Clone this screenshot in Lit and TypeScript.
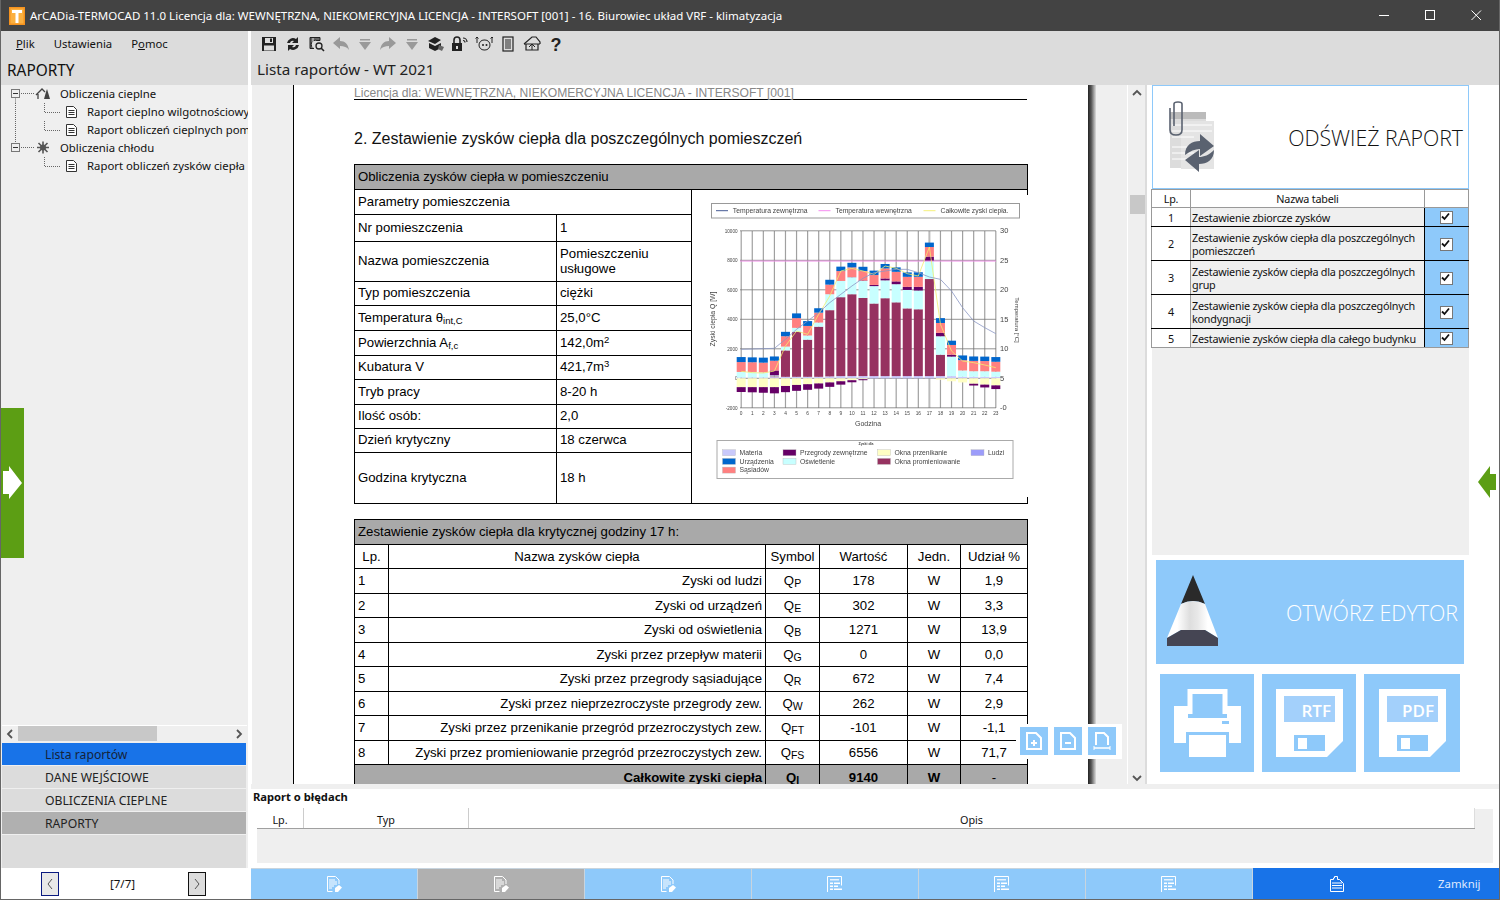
import { LitElement, html, css, svg } from 'lit';
import { customElement } from 'lit/decorators.js';

const blue = css`#8ec9fa`;

// cumulative tops per hour: ludzi, okna prom., oswietlenie, przegrody, sasiadow, urzadzenia + negative stack
const bars: number[][] = [
    [60, 60, 430, 430, 1100, 1440, -600, -930],
    [60, 60, 430, 430, 1090, 1420, -600, -950],
    [60, 60, 400, 400, 1060, 1400, -600, -980],
    [80, 130, 200, 530, 1190, 1480, -600, -1020],
    [100, 1890, 2150, 2150, 2850, 3150, -520, -940],
    [100, 3150, 3420, 3420, 4080, 4400, -450, -850],
    [100, 2620, 2900, 2900, 3550, 3880, -400, -780],
    [100, 3500, 3780, 3780, 4450, 4750, -350, -700],
    [130, 4620, 5700, 5700, 6350, 6680, -280, -580],
    [150, 5500, 6600, 6600, 7270, 7570, -200, -430],
    [150, 5700, 6850, 6860, 7520, 7830, -130, -270],
    [150, 5450, 6600, 6630, 7270, 7560, -60, -130],
    [150, 5070, 6250, 6330, 7000, 7300, 0, 0],
    [150, 5430, 6640, 6770, 7450, 7750, 0, 0],
    [150, 5150, 6380, 6570, 7220, 7520, 0, 0],
    [150, 4740, 5990, 6200, 6880, 7180, 0, 0],
    [150, 4680, 5950, 6200, 6880, 7190, 0, 0],
    [150, 6730, 7950, 8250, 8900, 9200, 0, 0],
    [150, 1600, 2850, 3080, 3750, 4080, -100, -100],
    [150, 150, 1470, 1600, 2260, 2550, -200, -200],
    [100, 100, 530, 530, 1230, 1550, -280, -280],
    [100, 100, 480, 480, 1180, 1480, -370, -490],
    [100, 100, 480, 480, 1170, 1470, -430, -620],
    [100, 100, 450, 450, 1120, 1440, -480, -730],
];
const stackColors = ['#c9c9fb', '#963260', '#c8ffff', '#660066', '#ff8080', '#0066cc'];
const outsideY = [475, 474, 473, 472, 445, 415, 390, 365, 335, 310, 285, 262, 245, 240, 235, 235, 245, 258, 265, 300, 350, 390, 410, 428];
const totalY = [541, 545, 546, 540, 465, 420, 430, 370, 315, 240, 232, 240, 250, 225, 232, 248, 255, 168, 400, 480, 510, 515, 522, 530];

// chart svg origin is page x=691.5, y=190
const hx = (i: number) => 49.2 + i * 11.07;
const wy = (w: number) => 187.3 - w * 0.01475;

const gains: string[][] = [
    ['1', 'Zyski od ludzi', 'Q', 'P', '178', 'W', '1,9'],
    ['2', 'Zyski od urządzeń', 'Q', 'E', '302', 'W', '3,3'],
    ['3', 'Zyski od oświetlenia', 'Q', 'B', '1271', 'W', '13,9'],
    ['4', 'Zyski przez przepływ materii', 'Q', 'G', '0', 'W', '0,0'],
    ['5', 'Zyski przez przegrody sąsiadujące', 'Q', 'R', '672', 'W', '7,4'],
    ['6', 'Zyski  przez nieprzezroczyste przegrody zew.', 'Q', 'W', '262', 'W', '2,9'],
    ['7', 'Zyski przez przenikanie przegród przezroczystych  zew.', 'Q', 'FT', '-101', 'W', '-1,1'],
    ['8', 'Zyski przez promieniowanie przegród przezroczystych zew.', 'Q', 'FS', '6556', 'W', '71,7'],
];

const tableRows: string[][] = [
    ['1', 'Zestawienie zbiorcze zysków'],
    ['2', 'Zestawienie zysków ciepła dla poszczególnych pomieszczeń'],
    ['3', 'Zestawienie zysków ciepła dla poszczególnych grup'],
    ['4', 'Zestawienie zysków ciepła dla poszczególnych kondygnacji'],
    ['5', 'Zestawienie zysków ciepła dla całego budynku'],
];

@customElement('app-root')
class AppRoot extends LitElement {
    static styles = css`
        :host {
            display: block;
            width: 1500px;
            height: 900px;
            position: relative;
            overflow: hidden;
            font-family: "Noto Sans", "Open Sans", sans-serif;
            font-size: 11.5px;
            color: #111;
            background: #fff;
        }
        .window {
            width: 1500px;
            height: 900px;
            display: flex;
            flex-direction: column;
            box-sizing: border-box;
            border-left: 1px solid #666;
            border-right: 1px solid #666;
            border-bottom: 1px solid #666;
        }

        /* title bar */
        .title {
            height: 31px;
            flex: none;
            background: #434343;
            color: #fff;
            display: flex;
            align-items: center;
            padding-left: 8px;
            gap: 5px;
            font-size: 11.52px;
        }
        .title .name { flex: 1; white-space: nowrap; }
        .logo { width: 16px; height: 18px; flex: none; }
        .win-btns { display: flex; }
        .win-btns span { width: 46px; height: 31px; display: flex; align-items: center; justify-content: center; }

        .body { flex: 1; display: flex; min-height: 0; }

        /* left column */
        .left { width: 247px; flex: none; display: flex; flex-direction: column; background: #efefef; }
        .left-head { height: 54px; flex: none; background: #dcdcdc; box-sizing: border-box; padding: 0 0 0 15px; }
        .menu { display: flex; gap: 19px; height: 24px; align-items: center; font-size: 11.3px; }
        .menu u { text-decoration-thickness: 1px; }
        .left-title { font-size: 15.4px; margin: 6px 0 0 -9px; line-height: 20px; }
        .tree { flex: 1; padding: 0 0 0 10px; overflow: hidden; }
        .tree-row { height: 18px; display: flex; align-items: center; white-space: nowrap; font-size: 11.35px; }
        .tree-row svg { flex: none; }
        .tree-row .lbl { margin-left: 7px; margin-bottom: 2px; }
        .tree-row.child .lbl { margin-left: 8px; }
        .hscroll { height: 16px; flex: none; display: flex; align-items: center; background: #efefef; margin: 0 1px 1px 1px; border-top: 1px solid #fff; }
        .hscroll .arr { width: 16px; flex: none; display: flex; justify-content: center; }
        .hscroll .track { flex: 1; height: 16px; }
        .hscroll .thumb { width: 139px; height: 15px; background: #c8c8c8; }
        .nav { flex: none; display: flex; flex-direction: column; padding: 0 2px 0 1px; background: #efefef; }
        .nav div { height: 22px; margin-bottom: 1px; padding-left: 43px; display: flex; align-items: center; background: #dcdcdc; font-size: 12.2px; color: #222; }
        .nav .cur { background: #1873e8; color: #15233a; }
        .nav .sel { background: #b0b0b0; }
        .nav .fill { height: 33px; margin: 0; background: #dcdcdc; }
        .pager { height: 31px; flex: none; background: #fff; display: flex; align-items: center; justify-content: space-between; padding: 0 42px 0 40px; }
        .pager button { width: 18px; height: 24px; padding: 0; box-sizing: border-box; background: #dcdcdc; border: 1px solid #111; display: flex; align-items: center; justify-content: center; }
        .pager button.focus { border-color: #0a1a80; background: #e8e8e8; }
        .pager span { font-size: 11.6px; margin-right: 2px; }

        /* right part */
        .right { flex: 1; display: flex; flex-direction: column; min-width: 0; padding-left: 3px; }
        .toolbar { height: 54px; flex: none; background: #dcdcdc; padding-left: 6px; }
        .tools { height: 26px; display: flex; align-items: center; gap: 5.9px; padding-left: 3px; }
        .tools svg { width: 18px; height: 18px; display: block; }
        .list-title { font-size: 15.25px; line-height: 22px; margin-top: 1px; color: #222; }
        .main { flex: 1; display: flex; min-height: 0; }
        .viewer { width: 896px; flex: none; display: flex; background: #efefef; position: relative; border-right: 2px solid #dcdcdc; box-sizing: border-box; }
        .paper-area { flex: 1; overflow: hidden; padding-left: 41px; display: flex; align-items: flex-start; border-left: 1px solid #fff; }
        .paper { width: 794px; flex: none; background: #fff; border-left: 1px solid #000; height: 100%; font-family: "Liberation Sans", Arial, sans-serif; }
        .paper-shadow { width: 8px; flex: none; height: 100%; background: linear-gradient(to right, #222, #555 40%, #ddd); }
        .paper-in { margin-left: 60px; width: 673px; }
        .lic { margin-top: 1px; height: 13px; line-height: 15px; border-bottom: 1px solid #000; font-size: 12.12px; color: #888; white-space: nowrap; }
        h2 { margin: 29px 0 0; font-size: 16px; font-weight: 400; line-height: 20px; color: #111; white-space: nowrap; }
        table { border-collapse: collapse; }
        .rep { width: 673px; table-layout: fixed; font-size: 13.2px; color: #000; box-sizing: border-box; }
        .rep td { border: 1px solid #000; padding: 0 3px; box-sizing: border-box; line-height: 15px; white-space: nowrap; }
        .rep td.head { background: #a9a9a9; }
        .t1 td { padding-bottom: 2px; }
        .t2 tr:first-child td { padding-bottom: 2px; }
        .rep sub { font-size: 9.5px; line-height: 0; vertical-align: -2px; }
        .rep sub.s { font-size: 10.5px; }
        .rep sup { font-size: 9.5px; line-height: 0; vertical-align: 4px; }
        .rep .c { text-align: center; }
        .rep .r { text-align: right; }
        .rep .b { font-weight: 700; }
        .t1 { margin-top: 15px; }
        .t2 { margin-top: 15px; }
        .chart-cell { padding: 0 !important; background: #fff; vertical-align: top; position: relative; }
        .chart { display: block; position: absolute; left: 0; top: 5px; width: 336px; height: 302px; background: #fff; filter: blur(0.3px); font-family: "Liberation Sans", Arial, sans-serif; }

        .vscroll { width: 18px; flex: none; display: flex; flex-direction: column; align-items: center; justify-content: space-between; padding: 4px 0 2px; box-sizing: border-box; border-left: 1px solid #fff; background: #efefef; position: relative; }
        .vthumb { position: absolute; left: 2px; right: 0; top: 110px; height: 19px; background: #c8c8c8; }

        /* floating zoom buttons */
        .zoom-btns { position: absolute; left: 765px; top: 639px; background: #fff; padding: 3px 6px 3px 4px; display: flex; gap: 6px; box-sizing: border-box; height: 35px; }
        .zoom-btns span { width: 28px; height: 28px; background: ${blue}; display: flex; align-items: center; justify-content: center; }

        /* report side panel */
        .side { flex: 1; background: #fff; position: relative; padding-left: 5px; }
        .side-in { width: 317px; }
        .refresh { height: 104px; box-sizing: border-box; border: 1px solid ${blue}; display: flex; align-items: center; justify-content: space-between; padding: 0 5px 0 16px; font-family: "Open Sans", sans-serif; font-weight: 300; font-size: 21.3px; color: #111; background: #fff; white-space: nowrap; }
        .ttab { width: 317px; margin-left: -1px; table-layout: fixed; font-size: 10.8px; letter-spacing: -0.22px; color: #111; }
        .ttab td { padding: 0 1px; box-sizing: border-box; line-height: 13px; background: #efefef; border-bottom: 1px solid #000; border-left: 1px solid #999; border-right: 1px solid #000; }
        .ttab .lp { text-align: center; background: #fff; border-right-color: #999; }
        .ttab .chk { background: ${blue}; border-left: 0; border-right: 1px solid #999; text-align: center; padding-right: 2px; }
        .ttab tr.h td { background: #fff; border-bottom: 1px solid #999; border-top: 1px solid #999; border-right: 1px solid #999; text-align: center; }
        .ttab tr:last-child td { border-bottom-color: #999; }
        .box { width: 11px; height: 11px; border: 1px solid #777; background: #fff; display: inline-flex; vertical-align: middle; }
        .side-fill { height: 207px; background: #efefef; }
        .editor { margin: 5px 0 0 4px; width: 308px; height: 104px; background: ${blue}; display: flex; align-items: center; justify-content: space-between; padding: 0 6px 0 11px; box-sizing: border-box; color: #fff; font-family: "Open Sans", sans-serif; font-weight: 300; font-size: 21.4px; white-space: nowrap; }
        .editor svg { margin-bottom: 4px; flex: none; }
        .exports { margin: 10px 0 0 8px; display: flex; gap: 8px; }
        .exports div { width: 94px; height: 98px; background: ${blue}; display: flex; align-items: center; justify-content: center; }
        .exports div:last-child { width: 96px; }
        .exports svg { font-family: "Open Sans", sans-serif; }
        .side-arrow { position: absolute; left: 331px; top: 381px; }

        .left-arrow { position: absolute; left: 1px; top: 408px; width: 23px; height: 150px; background: #5c9e14; display: flex; align-items: center; justify-content: center; }
        .left-arrow svg { margin-bottom: 2px; }

        /* error report */
        .errors { height: 84px; flex: none; background: #fff; border-top: 5px solid #efefef; box-sizing: border-box; position: relative; }
        .err-title { font-weight: 700; font-size: 11.2px; line-height: 15px; padding-left: 2px; }
        .err-grid { margin: 4px 6px 0 6px; }
        .err-head { height: 21px; display: flex; font-size: 10.8px; border-bottom: 1px solid #a0a0a0; width: 1218px; box-sizing: border-box; align-items: center; }
        .err-head span { text-align: center; box-sizing: border-box; border-right: 1px solid #ccc; height: 20px; line-height: 24px; }
        .err-head .e1 { width: 47px; }
        .err-head .e2 { width: 165px; }
        .err-head .e3 { flex: 1; border-right: 1px solid #ddd; }
        .err-body { height: 34px; background: #efefef; }
        .err-corner { position: absolute; left: 1224px; top: 20px; width: 18px; height: 21px; background: #efefef; }

        /* bottom tabs */
        .tabs { height: 31px; flex: none; display: flex; }
        .tabs .tab { width: 167px; background: ${blue}; border-right: 1px solid #c8d4de; box-sizing: border-box; display: flex; align-items: center; justify-content: center; border-top: 1px solid #c8d4de; }
        .tabs .tab.on { background: #b0b0b0; }
        .tabs .close { flex: 1; background: #1873e8; display: flex; align-items: center; color: #dfe9ff; padding-left: 77px; font-size: 11.4px; }
        .tabs .close svg { margin-right: 94px; }
    `;

    render() {
        return html`
            <div class="window">
                <div class="title">
                    <svg class="logo" viewBox="0 0 16 18">
                        <rect width="16" height="18" fill="#f5921e"/><rect x="1.500" y="1.500" width="13" height="15" fill="#fbb040"/>
                        <path d="M3 3h10v3H9.500v10h-3V6H3z" fill="#fff"/>
                    </svg>
                    <span class="name">ArCADia-TERMOCAD 11.0 Licencja dla: WEWNĘTRZNA, NIEKOMERCYJNA LICENCJA - INTERSOFT [001] - 16. Biurowiec układ VRF - klimatyzacja</span>
                    <div class="win-btns">
                        <span><svg width="11" height="11"><path d="M0 5.500h10" stroke="#fff"/></svg></span>
                        <span><svg width="11" height="11"><rect x=".5" y=".5" width="9" height="9" fill="none" stroke="#fff"/></svg></span>
                        <span><svg width="11" height="11"><path d="M.5.500l9.500 9.500M10 .5L.5 10" stroke="#fff"/></svg></span>
                    </div>
                </div>
                <div class="body">
                    ${this.renderLeft()}
                    <div class="right">
                        <div class="toolbar">
                            <div class="tools">${this.renderTools()}</div>
                            <div class="list-title">Lista raportów - WT 2021</div>
                        </div>
                        <div class="main">
                            ${this.renderViewer()}
                            ${this.renderSide()}
                        </div>
                        <div class="errors">
                            <div class="err-title">Raport o błędach</div>
                            <div class="err-grid">
                                <div class="err-head"><span class="e1">Lp.</span><span class="e2">Typ</span><span class="e3">Opis</span></div>
                                <div class="err-body"></div>
                            </div>
                            <div class="err-corner"></div>
                        </div>
                        <div class="tabs">
                            ${[0, 1, 2].map(i => html`<div class="tab ${i === 1 ? 'on' : ''}">${this.tabDoc()}</div>`)}
                            ${[0, 1, 2].map(() => html`<div class="tab">${this.tabCalc()}</div>`)}
                            <div class="close">
                                <svg width="14" height="16" viewBox="0 0 14 16"><path d="M.5 3.500h3V2h1V.5h3V3.500h2l4 4v8H.5z" fill="none" stroke="#fff"/><path d="M2 7h10M2 9.500h10M2 12h10" stroke="#fff"/></svg>
                                Zamknij
                            </div>
                        </div>
                    </div>
                </div>
                <div class="left-arrow">
                    <svg width="19" height="33" viewBox="0 0 19 33"><path d="M0 5h6V0l13 17L6 33v-5H0z" fill="#fff"/></svg>
                </div>
            </div>
        `;
    }

    treeChild(label: string, outerLine: boolean) {
        return html`
            <div class="tree-row child">
                <svg width="68" height="18" viewBox="0 0 68 18">
                    ${outerLine ? svg`<path d="M4.500 0v18" stroke="#666" stroke-dasharray="1 1"/>` : ''}
                    <path d="M33.500 0v9.500H50" fill="none" stroke="#666" stroke-dasharray="1 1"/>
                    <path d="M55.500 3.500h7l3 3v8h-10z" fill="#fff" stroke="#333"/>
                    <path d="M57.500 7.500h6M57.500 9.500h6M57.500 11.500h6" stroke="#333"/>
                </svg>
                <span class="lbl">${label}</span>
            </div>
        `;
    }

    renderLeft() {
        return html`
            <div class="left">
                <div class="left-head">
                    <div class="menu"><span><u>P</u>lik</span><span>Ustawienia</span><span>P<u>o</u>moc</span></div>
                    <div class="left-title">RAPORTY</div>
                </div>
                <div class="tree">
                    <div class="tree-row">
                        <svg width="42" height="18" viewBox="0 0 42 18"><path d="M4.500 12.500V18" stroke="#666" stroke-dasharray="1 1"/><rect x=".5" y="4.500" width="8" height="8" fill="#efefef" stroke="#777"/><path d="M2 8.500h5" stroke="#333"/><path d="M10 8.500h13" stroke="#666" stroke-dasharray="1 1"/><path d="M25 10l6-6 3 3m-7 2v5" fill="none" stroke="#444" stroke-width="1.300"/><path d="M33 14l2-7 1-3 3 10z" fill="#444"/></svg>
                        <span class="lbl">Obliczenia cieplne</span>
                    </div>
                    ${this.treeChild('Raport cieplno wilgotnościowy', true)}
                    ${this.treeChild('Raport obliczeń cieplnych pomieszczeń', true)}
                    <div class="tree-row">
                        <svg width="42" height="18" viewBox="0 0 42 18"><path d="M4.500 0v4.500" stroke="#666" stroke-dasharray="1 1"/><rect x=".5" y="4.500" width="8" height="8" fill="#efefef" stroke="#777"/><path d="M2 8.500h5" stroke="#333"/><path d="M10 8.500h13" stroke="#666" stroke-dasharray="1 1"/><g stroke="#555" stroke-width="1.600" fill="none"><path d="M32 2.500v12M26 8.500h12M27.500 4l9 9M36.500 4l-9 9"/></g><circle cx="32" cy="8.500" r="3" fill="#555"/></svg>
                        <span class="lbl">Obliczenia chłodu</span>
                    </div>
                    ${this.treeChild('Raport obliczeń zysków ciepła', false)}
                </div>
                <div class="hscroll">
                    <span class="arr">${this.chev('M6 1L2 5l4 4')}</span>
                    <div class="track"><div class="thumb"></div></div>
                    <span class="arr">${this.chev('M2 1l4 4-4 4')}</span>
                </div>
                <div class="nav">
                    <div class="cur">Lista raportów</div>
                    <div>DANE WEJŚCIOWE</div>
                    <div>OBLICZENIA CIEPLNE</div>
                    <div class="sel">RAPORTY</div>
                    <div class="fill"></div>
                </div>
                <div class="pager">
                    <button class="focus"><svg width="8" height="14"><path d="M6 2L2 7l4 5" fill="none" stroke="#555"/></svg></button>
                    <span>[7/7]</span>
                    <button><svg width="8" height="14"><path d="M2 2l4 5-4 5" fill="none" stroke="#555"/></svg></button>
                </div>
            </div>
        `;
    }

    chev(d: string) {
        return html`<svg width="8" height="10"><path d=${d} fill="none" stroke="#555" stroke-width="1.800"/></svg>`;
    }

    renderTools() {
        const k = '#222';
        const g = '#999';
        const tools = [
            svg`<path d="M2 2h14v14H2z" fill="${k}"/><rect x="5" y="3" width="8" height="5" fill="#ddd"/><rect x="4" y="10.500" width="10" height="5" fill="#ddd"/><rect x="10" y="3.500" width="2" height="3.500" fill="${k}"/>`,
            svg`<path d="M3 8a6 6 0 0 1 9-4l2-2v6H8l2-2a3 3 0 0 0-4 2zM15 10a6 6 0 0 1-9 4l-2 2v-6h6l-2 2a3 3 0 0 0 4-2z" fill="${k}"/>`,
            svg`<path d="M2 2.500h10v3H9a4 4 0 0 0-3 8H2z" fill="#666" stroke="${k}"/><path d="M5 3v10" stroke="#ddd"/><circle cx="11" cy="11" r="3" fill="#ddd" stroke="${k}" stroke-width="1.300"/><path d="M13 13l3 3" stroke="${k}" stroke-width="1.600"/>`,
            svg`<path d="M1 8l7-6v4c5 0 8 3 9 9-2-3-5-4-9-4v3z" fill="${g}"/>`,
            svg`<path d="M4 4h10v1.500H4zM3 7h12l-6 8z" fill="${g}"/>`,
            svg`<path d="M17 8l-7-6v4C5 6 2 9 1 15c2-3 5-4 9-4v3z" fill="${g}"/>`,
            svg`<path d="M4 4h10v1.500H4zM3 7h12l-6 8z" fill="${g}"/>`,
            svg`<path d="M1 6l7-4 6 3-6 4zM2 8l6 3 6-3v5l-6 3-6-3z" fill="${k}"/><path d="M12 10l5 2-2 4-4-2z" fill="#666"/>`,
            svg`<rect x="1" y="8" width="10" height="8" fill="${k}"/><path d="M3 8V5a3 3 0 0 1 6 0v3" fill="none" stroke="${k}" stroke-width="1.600"/><rect x="5" y="11" width="2" height="3" fill="#ddd"/><path d="M12 3a4 4 0 0 1 4 4M12 5.500a2 2 0 0 1 2 2" fill="none" stroke="${k}" stroke-width="1.200"/>`,
            svg`<rect x="4" y="5" width="11" height="10" rx="5" fill="#ddd" stroke="${k}"/><circle cx="8" cy="10" r="1" fill="${k}"/><circle cx="11.500" cy="10" r="1" fill="${k}"/><path d="M2 8V2M.5 3.500L2 2l1.500 1.500M17 8V2M15.500 3.500L17 2l1.500 1.500" fill="none" stroke="${k}"/>`,
            svg`<rect x="4" y="2" width="10" height="14" fill="#ddd" stroke="${k}" stroke-width="1.200"/><path d="M6 5h6M6 7h6M6 9h6M6 11h6M6 13h6" stroke="${k}"/>`,
            svg`<path d="M1 9l8-7h4l4 5v2M3 9v6h12V9" fill="none" stroke="${k}" stroke-width="1.200"/><path d="M1 9h16M6 12l3-3 3 3M9 9v6" fill="none" stroke="${k}"/>`,
            svg`<text x="9" y="15.500" text-anchor="middle" font-family="Liberation Sans" font-weight="700" font-size="18" fill="${k}">?</text>`,
        ];
        return tools.map(t => html`<svg viewBox="0 0 18 18">${t}</svg>`);
    }

    tabDoc() {
        return html`<svg width="15" height="17" viewBox="0 0 15 17"><path d="M.5.500h8l3.500 3.500v4" fill="none" stroke="#fff"/><path d="M.5.500v15h5" fill="none" stroke="#fff"/><path d="M2 4h6M2 6h8M2 8h8M2 10h5M2 12h3" stroke="#fff"/><path d="M8 12l4-3 3 2.500-4 4.500H8z" fill="#fff"/></svg>`;
    }

    tabCalc() {
        return html`<svg width="16" height="16" viewBox="0 0 16 16"><path d="M.5 16V.5h14v9" fill="none" stroke="#fff"/><path d="M3 3h9v1.500H3z" fill="#fff" opacity=".8"/><path d="M3 6.500h3v1.500H3zM7 6.500h6v1.500H7zM3 9.500h3V11H3zM7 9.500h4V11H7zM3 12.500h3V14H3zM7 12.500h8V14H7z" fill="#fff"/></svg>`;
    }

    renderViewer() {
        return html`
            <div class="viewer">
                <div class="paper-area">
                    <div class="paper">
                        <div class="paper-in">
                            <div class="lic">Licencja dla: WEWNĘTRZNA, NIEKOMERCYJNA LICENCJA - INTERSOFT [001]</div>
                            <h2>2. Zestawienie zysków ciepła dla poszczególnych pomieszczeń</h2>
                            ${this.renderRoomTable()}
                            ${this.renderGainsTable()}
                        </div>
                    </div>
                    <div class="paper-shadow"></div>
                </div>
                <div class="vscroll">
                    <svg width="10" height="8"><path d="M1 6l4-4 4 4" fill="none" stroke="#555" stroke-width="1.800"/></svg>
                    <div class="vthumb"></div>
                    <svg width="10" height="8"><path d="M1 2l4 4 4-4" fill="none" stroke="#555" stroke-width="1.800"/></svg>
                </div>
                <div class="zoom-btns">
                    <span><svg width="16" height="18" viewBox="0 0 16 18"><path d="M1 1h9l5 5v11H1z" fill="none" stroke="#fff" stroke-width="2"/><path d="M5 11h6M8 8v6" stroke="#fff" stroke-width="2"/></svg></span>
                    <span><svg width="16" height="18" viewBox="0 0 16 18"><path d="M1 1h9l5 5v11H1z" fill="none" stroke="#fff" stroke-width="2"/><path d="M5 11h6" stroke="#fff" stroke-width="2"/></svg></span>
                    <span><svg width="18" height="18" viewBox="0 0 18 18"><path d="M3 13V1h8l4 4v8" fill="none" stroke="#fff" stroke-width="2"/><path d="M1 16h16" stroke="#fff" stroke-width="1.500"/><path d="M1 14v4M17 14v4" stroke="#fff"/></svg></span>
                </div>
            </div>
        `;
    }

    renderRoomTable() {
        const rows: [unknown, unknown, number][] = [
            ['Nr pomieszczenia', '1', 27],
            ['Nazwa pomieszczenia', html`Pomieszczeniu<br>usługowe`, 40],
            ['Typ pomieszczenia', 'ciężki', 24],
            [html`Temperatura θ<sub>int,C</sub>`, '25,0°C', 25],
            [html`Powierzchnia A<sub>f,c</sub>`, html`142,0m<sup>2</sup>`, 25],
            ['Kubatura V', html`421,7m<sup>3</sup>`, 24],
            ['Tryb pracy', '8-20 h', 25],
            ['Ilość osób:', '2,0', 24],
            ['Dzień krytyczny', '18 czerwca', 24],
            ['Godzina krytyczna', '18 h', 51],
        ];
        return html`
            <table class="rep t1">
                <colgroup><col style="width:202px"><col style="width:135px"><col style="width:336px"></colgroup>
                <tr style="height:25px"><td class="head" colspan="3">Obliczenia zysków ciepła w pomieszczeniu</td></tr>
                <tr style="height:25px">
                    <td colspan="2">Parametry pomieszczenia</td>
                    <td class="chart-cell" rowspan="11">${this.renderChart()}</td>
                </tr>
                ${rows.map(r => html`<tr style="height:${r[2]}px"><td>${r[0]}</td><td>${r[1]}</td></tr>`)}
            </table>
        `;
    }

    renderGainsTable() {
        return html`
            <table class="rep t2">
                <colgroup>
                    <col style="width:34px"><col style="width:377px"><col style="width:54px">
                    <col style="width:88px"><col style="width:53px"><col style="width:67px">
                </colgroup>
                <tr style="height:25px"><td class="head" colspan="6">Zestawienie zysków ciepła dla krytycznej godziny 17 h:</td></tr>
                <tr style="height:24px">
                    <td class="c">Lp.</td><td class="c">Nazwa zysków ciepła</td><td class="c">Symbol</td>
                    <td class="c">Wartość</td><td class="c">Jedn.</td><td class="c">Udział %</td>
                </tr>
                ${gains.map(g => html`
                    <tr style="height:24.5px">
                        <td>${g[0]}</td><td class="r">${g[1]}</td>
                        <td class="c">${g[2]}<sub class="s">${g[3]}</sub></td>
                        <td class="c">${g[4]}</td><td class="c">${g[5]}</td><td class="c">${g[6]}</td>
                    </tr>
                `)}
                <tr style="height:25px">
                    <td class="head" colspan="2" style="text-align:right"><b>Całkowite zyski ciepła</b></td>
                    <td class="head c b">Q<sub class="s">I</sub></td><td class="head c b">9140</td><td class="head c b">W</td><td class="head c">-</td>
                </tr>
            </table>
        `;
    }

    renderChart() {
        const grid = [];
        for (let i = 0; i < 24; i++) {
            grid.push(svg`<line x1=${hx(i)} x2=${hx(i)} y1="40" y2="217" stroke=${i === 17 ? '#bbb' : '#a0a0a0'} stroke-width=${i === 17 ? 2 : 1.2}/>`);
        }
        const hlines = [-2000, 0, 2000, 4000, 6000, 8000, 10000].map(v => svg`
            <line x1="48" x2="304" y1=${wy(v)} y2=${wy(v)} stroke="#777" stroke-width=".8"/>
            <text x="45.500" y=${wy(v) + 1.8} text-anchor="end" font-size="4.600" fill="#444">${v}</text>
        `);
        const rights = [0, 5, 10, 15, 20, 25, 30].map((v, i) => svg`
            <text x="308" y=${216.7 - i * 29.5 + 2.5} font-size="7.500" fill="#444">${v === 0 ? '-0' : v}</text>
        `);
        const stacks = bars.map((b, i) => {
            const x = hx(i) - 4.5;
            const parts = [];
            let prev = 0;
            for (let s = 0; s < 6; s++) {
                if (b[s] > prev) {
                    parts.push(svg`<rect x=${x} width="9" y=${wy(b[s])} height=${(b[s] - prev) * 0.01475} fill=${stackColors[s]}/>`);
                    prev = b[s];
                }
            }
            if (b[6] < 0) parts.push(svg`<rect x=${x} width="9" y=${wy(0)} height=${-b[6] * 0.01475} fill="#ffffc4"/>`);
            if (b[7] < b[6]) parts.push(svg`<rect x=${x} width="9" y=${wy(b[6])} height=${(b[6] - b[7]) * 0.01475} fill="#660066"/>`);
            return parts;
        });
        const pts = (ys: number[]) => ys.map((y, i) => `${hx(i)},${y / 3}`).join(' ');
        const labels = [];
        for (let i = 0; i < 24; i++) {
            labels.push(svg`<text x=${hx(i)} y="224" font-size="4.800" text-anchor="middle" fill="#444">${i}</text>`);
        }
        const legend: [number, number, string, string][] = [
            [30.5, 0, '#c9c9fb', 'Materia'], [30.5, 1, '#0066cc', 'Urządzenia'], [30.5, 2, '#ff8080', 'Sąsiadów'],
            [91, 0, '#660066', 'Przegrody zewnętrzne'], [91, 1, '#c8ffff', 'Oświetlenie'],
            [185.5, 0, '#ffffc4', 'Okna przenikanie'], [185.5, 1, '#963260', 'Okna promieniowanie'],
            [279, 0, '#9c9cfa', 'Ludzi'],
        ];
        return html`
            <svg class="chart" viewBox="0 4 336 302">
                <rect x="19.500" y="12.500" width="308" height="14.500" fill="#fff" stroke="#999"/>
                <g font-size="6.800" fill="#444">
                    <line x1="24" x2="36" y1="19.700" y2="19.700" stroke="#465a94"/><text x="40.800" y="22">Temperatura zewnętrzna</text>
                    <line x1="126.500" x2="138.500" y1="19.700" y2="19.700" stroke="#f58cf0"/><text x="143.500" y="22">Temperatura wewnętrzna</text>
                    <line x1="231.500" x2="243.500" y1="19.700" y2="19.700" stroke="#f5f07a"/><text x="248.500" y="22">Całkowite zyski ciepła.</text>
                </g>
                ${grid}
                ${hlines}
                ${stacks}
                <line x1="48" x2="304" y1=${wy(7950)} y2=${wy(7950)} stroke="#f090e8" stroke-width="1"/>
                <polyline points=${pts(totalY)} fill="none" stroke="#f2ee70" stroke-width=".8"/>
                <polyline points=${pts(outsideY)} fill="none" stroke="#8a97c4" stroke-width=".8"/>
                ${rights}
                ${labels}
                <text x="176" y="235" font-size="7" text-anchor="middle" fill="#444">Godzina</text>
                <text transform="translate(23 128) rotate(-90)" font-size="6.800" text-anchor="middle" fill="#444">Zyski ciepła Q [W]</text>
                <text transform="translate(322.500 129) rotate(90)" font-size="6" text-anchor="middle" fill="#444">Temperatura [°C]</text>
                <rect x="25" y="249.500" width="296" height="38" fill="#fff" stroke="#aaa"/>
                <text x="174" y="254" font-size="3.500" font-weight="700" text-anchor="middle" fill="#444">Zyski dla</text>
                ${legend.map(l => svg`
                    <rect x=${l[0]} y=${258.7 + l[1] * 8.7} width="13" height="6" fill=${l[2]} stroke="#bbb" stroke-width=".4"/>
                    <text x=${l[0] + 17} y=${264 + l[1] * 8.7} font-size="6.800" fill="#444">${l[3]}</text>
                `)}
            </svg>
        `;
    }

    renderSide() {
        const heights = [19, 34, 34, 34, 19];
        return html`
            <div class="side">
                <div class="side-in">
                    <div class="refresh">
                        ${this.refreshIcon()}
                        <span>ODŚWIEŻ RAPORT</span>
                    </div>
                    <table class="ttab">
                        <colgroup><col style="width:39px"><col style="width:234px"><col style="width:44px"></colgroup>
                        <tr class="h" style="height:18px"><td class="lp">Lp.</td><td>Nazwa tabeli</td><td></td></tr>
                        ${tableRows.map((r, i) => html`
                            <tr style="height:${heights[i]}px">
                                <td class="lp">${r[0]}</td><td>${r[1]}</td>
                                <td class="chk"><span class="box"><svg width="9" height="9" viewBox="0 0 9 9"><path d="M1 4.500l2.500 2.500 4.500-5.500" fill="none" stroke="#111" stroke-width="1.800"/></svg></span></td>
                            </tr>
                        `)}
                    </table>
                    <div class="side-fill"></div>
                    <div class="editor">
                        <svg width="51" height="71" viewBox="0 0 51 71">
                            <defs><linearGradient id="pen" x1="0" x2="1" y1="0" y2="0"><stop offset=".2" stop-color="#fff"/><stop offset=".45" stop-color="#dedede"/><stop offset=".6" stop-color="#e8e8e8"/><stop offset=".8" stop-color="#fff"/></linearGradient></defs>
                            <path d="M14 29L26 0l12 29q-12-6-24 0z" fill="#2a2a2a"/>
                            <path d="M14 29q12-6 24 0l13 34-13-8H14L0 63z" fill="url(#pen)"/>
                            <path d="M14 55h24l13 8v8H0v-8z" fill="#454553"/>
                        </svg>
                        <span>OTWÓRZ EDYTOR</span>
                    </div>
                    <div class="exports">
                        <div>
                            <svg width="67" height="68" viewBox="0 0 67 68">
                                <path d="M16 25V2.500h35V25" fill="none" stroke="#fff" stroke-width="5"/>
                                <path d="M0 17h14v12h39V17h14v37H55V43H12v11H0z" fill="#fff"/>
                                <rect x="48" y="32" width="7" height="3" fill="${blue}"/>
                                <rect x="15" y="46" width="37" height="22" fill="#fff"/>
                            </svg>
                        </div>
                        <div>${this.diskIcon('RTF')}</div>
                        <div>${this.diskIcon('PDF')}</div>
                    </div>
                </div>
                <div class="side-arrow">
                    <svg width="18" height="32" viewBox="0 0 18 32"><path d="M0 16L12 0v8h6v16h-6v8z" fill="#5c9e14"/></svg>
                </div>
            </div>
        `;
    }

    diskIcon(label: string) {
        return html`
            <svg width="67" height="68" viewBox="0 0 67 68">
                <path d="M0 0h67v52L51 68H0z" fill="#fff"/>
                <rect x="8" y="7" width="51" height="26" fill="#a3d0fb"/>
                <text x="55" y="28" text-anchor="end" font-size="17" font-weight="600" fill="#fff">${label}</text>
                <rect x="18" y="46" width="31" height="16" fill="${blue}"/>
                <rect x="22" y="49" width="9" height="11" fill="#fff"/>
            </svg>
        `;
    }

    refreshIcon() {
        return html`
            <svg width="46" height="72" viewBox="0 0 46 72">
                <rect x="1" y="11" width="36" height="56" fill="#dcdcdc"/>
                <rect x="1" y="11" width="36" height="7" fill="#bbb"/>
                <rect x="12" y="20" width="33" height="48" fill="#e4e4e4"/>
                <path d="M3 24h40M3 30h40M3 36h22M3 46h24M3 52h22M3 58h22" stroke="#fff"/>
                <path d="M1 7v22q0 5 6 5t6-5V3q0-2-4-2T5 3v22" fill="none" stroke="#5a6270" stroke-width="1.600"/>
                <path d="M16 54c0-10 7-14 15-14v-7l14 12-14 10v-7c-5 0-10 2-15 6z" fill="#5a6270"/>
                <path d="M45 49c0 10-7 14-15 14v8L16 59l14-10v7c5 0 10-2 15-7z" fill="#5a6270"/>
            </svg>
        `;
    }
}

declare global {
    interface HTMLElementTagNameMap {
        "app-root": AppRoot;
    }
}
